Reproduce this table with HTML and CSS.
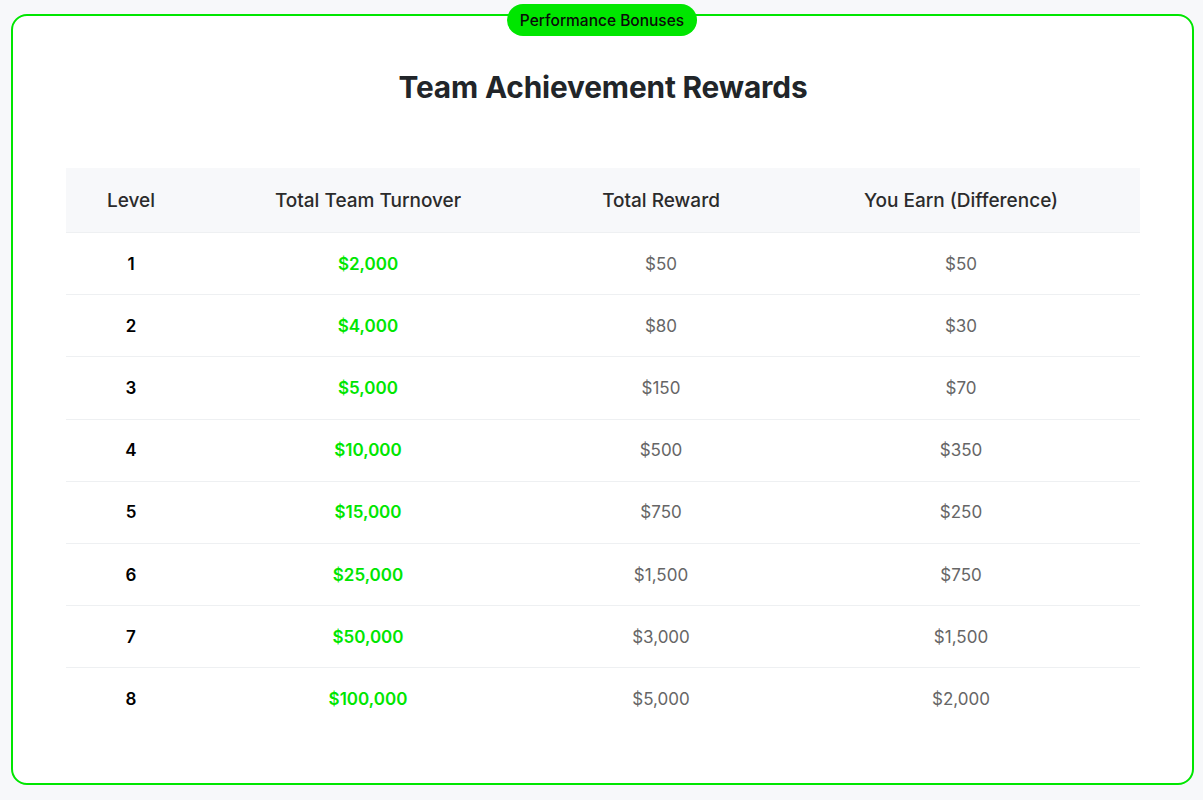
FILE: index.html
```html
<!DOCTYPE html>
<html lang="en">
<head>
<meta charset="utf-8">
<link rel="stylesheet" href="styles.css">
</head>
<body>
<div class="card">
  <div class="badge">Performance Bonuses</div>
  <h1 class="title">Team Achievement Rewards</h1>
  <table class="rewards">
    <colgroup>
      <col class="c1"><col class="c2"><col class="c3"><col class="c4">
    </colgroup>
    <thead>
      <tr><th>Level</th><th>Total Team Turnover</th><th>Total Reward</th><th>You Earn (Difference)</th></tr>
    </thead>
    <tbody>
      <tr><td class="lvl">1</td><td class="turn">$2,000</td><td class="val">$50</td><td class="val">$50</td></tr>
      <tr><td class="lvl">2</td><td class="turn">$4,000</td><td class="val">$80</td><td class="val">$30</td></tr>
      <tr><td class="lvl">3</td><td class="turn">$5,000</td><td class="val">$150</td><td class="val">$70</td></tr>
      <tr><td class="lvl">4</td><td class="turn">$10,000</td><td class="val">$500</td><td class="val">$350</td></tr>
      <tr><td class="lvl">5</td><td class="turn">$15,000</td><td class="val">$750</td><td class="val">$250</td></tr>
      <tr><td class="lvl">6</td><td class="turn">$25,000</td><td class="val">$1,500</td><td class="val">$750</td></tr>
      <tr><td class="lvl">7</td><td class="turn">$50,000</td><td class="val">$3,000</td><td class="val">$1,500</td></tr>
      <tr><td class="lvl">8</td><td class="turn">$100,000</td><td class="val">$5,000</td><td class="val">$2,000</td></tr>
    </tbody>
  </table>
</div>
</body>
</html>
```
FILE: styles.css
```css
html, body {
  margin: 0;
  padding: 0;
  background: #f7f8fa;
  font-family: Inter, "Noto Sans", sans-serif;
}
body {
  padding: 14px 9px 15px 11px;
}
.card {
  position: relative;
  box-sizing: border-box;
  width: 1183px;
  height: 771px;
  background: #ffffff;
  border: 2px solid #00e600;
  border-radius: 16px;
  padding: 51px 52px 0 53px;
}
.badge {
  position: absolute;
  top: -12px;
  left: 494px;
  width: 190px;
  height: 32px;
  box-sizing: border-box;
  border-radius: 16px;
  background: #00e600;
  color: #0a0a0a;
  font-size: 15.5px;
  font-weight: 500;
  display: flex;
  align-items: center;
  justify-content: center;
}
.title {
  margin: 0;
  text-align: center;
  font-size: 29.8px;
  font-weight: 700;
  color: #212529;
  letter-spacing: -0.15px;
  line-height: 40px;
}
.rewards {
  margin-top: 61px;
  width: 1074px;
  border-collapse: collapse;
  table-layout: fixed;
}
.c1 { width: 130px; }
.c2 { width: 344px; }
.c3 { width: 242px; }
.c4 { width: 358px; }
.rewards th {
  background: #f7f8fa;
  height: 64px;
  padding: 0;
  font-size: 19px;
  font-weight: 500;
  color: #2b2b2b;
  text-align: center;
  border-bottom: 1px solid #eef0f2;
}
.rewards td {
  height: 61.2px;
  padding: 0;
  text-align: center;
  font-size: 17px;
  border-bottom: 1px solid #eef0f2;
}
.rewards tbody tr:last-child td {
  border-bottom: none;
}
.lvl {
  color: #000;
  font-weight: 600;
}
.turn {
  color: #00e600;
  font-weight: 600;
}
.val {
  color: #666;
  font-weight: 400;
}
```
